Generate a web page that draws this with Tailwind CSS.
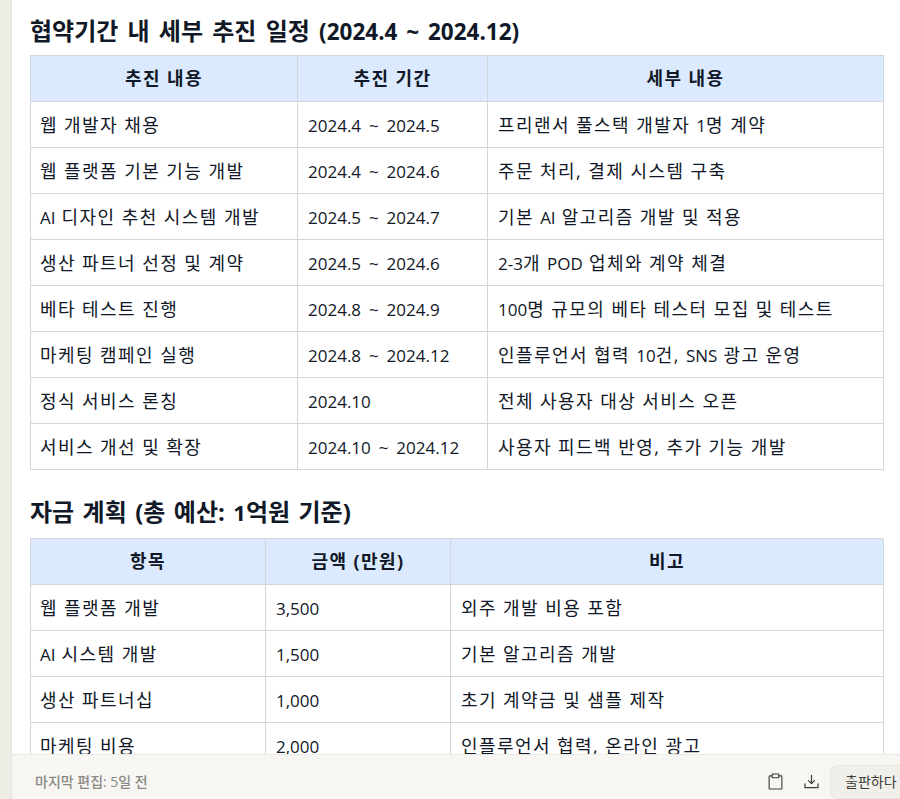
<!DOCTYPE html>
<html lang="ko">
<head>
    <meta charset="UTF-8">
    <title>추진 일정</title>
    <script src="https://cdn.jsdelivr.net/npm/@tailwindcss/browser@4"></script>
</head>
<body class="h-[799px] overflow-hidden bg-[#eeede5] font-['Open_Sans','Noto_Sans_CJK_KR',sans-serif] text-[#111827]">
    <div class="ml-[11px] h-full flex flex-col border-l border-[#e3e1d8] bg-white">
        <!-- Document -->
        <main class="flex-1 overflow-hidden pl-[18px] pr-[16px] pt-[15px]">
            <h2 class="h-[40px] text-[24px] leading-[32px] font-bold tracking-normal [word-spacing:3px]">협약기간 내 세부 추진 일정 <span class="text-[22.500px]">(2024.4 ~ 2024.12)</span></h2>
            <table class="w-[853px] table-fixed border-collapse text-[18px] tracking-[1.44px] [&_span]:text-[17px] [&_span]:tracking-normal [&_span]:[word-spacing:3.5px] [&_td]:pt-[1px] [&_td:first-child]:pl-[9px]">
                <colgroup>
                    <col class="w-[267px]"><col class="w-[190px]"><col class="w-[396px]">
                </colgroup>
                <thead>
                    <tr class="h-[46px] bg-[#dbeafe]">
                        <th class="border border-[#d3d6da] px-[10px] font-bold">추진 내용</th>
                        <th class="border border-[#d3d6da] px-[10px] font-bold">추진 기간</th>
                        <th class="border border-[#d3d6da] px-[10px] font-bold">세부 내용</th>
                    </tr>
                </thead>
                <tbody>
                    <tr class="h-[46px]"><td class="border border-[#d3d6da] px-[10px]">웹 개발자 채용</td><td class="border border-[#d3d6da] px-[10px]"><span>2024.4 ~ 2024.5</span></td><td class="border border-[#d3d6da] px-[10px]">프리랜서 풀스택 개발자 <span>1</span>명 계약</td></tr>
                    <tr class="h-[46px]"><td class="border border-[#d3d6da] px-[10px]">웹 플랫폼 기본 기능 개발</td><td class="border border-[#d3d6da] px-[10px]"><span>2024.4 ~ 2024.6</span></td><td class="border border-[#d3d6da] px-[10px]">주문 처리, 결제 시스템 구축</td></tr>
                    <tr class="h-[46px]"><td class="border border-[#d3d6da] px-[10px]"><span>AI</span> 디자인 추천 시스템 개발</td><td class="border border-[#d3d6da] px-[10px]"><span>2024.5 ~ 2024.7</span></td><td class="border border-[#d3d6da] px-[10px]">기본 <span>AI</span> 알고리즘 개발 및 적용</td></tr>
                    <tr class="h-[46px]"><td class="border border-[#d3d6da] px-[10px]">생산 파트너 선정 및 계약</td><td class="border border-[#d3d6da] px-[10px]"><span>2024.5 ~ 2024.6</span></td><td class="border border-[#d3d6da] px-[10px]"><span>2-3</span>개 <span>POD</span> 업체와 계약 체결</td></tr>
                    <tr class="h-[46px]"><td class="border border-[#d3d6da] px-[10px]">베타 테스트 진행</td><td class="border border-[#d3d6da] px-[10px]"><span>2024.8 ~ 2024.9</span></td><td class="border border-[#d3d6da] px-[10px]"><span>100</span>명 규모의 베타 테스터 모집 및 테스트</td></tr>
                    <tr class="h-[46px]"><td class="border border-[#d3d6da] px-[10px]">마케팅 캠페인 실행</td><td class="border border-[#d3d6da] px-[10px]"><span>2024.8 ~ 2024.12</span></td><td class="border border-[#d3d6da] px-[10px]">인플루언서 협력 <span>10</span>건, <span>SNS</span> 광고 운영</td></tr>
                    <tr class="h-[46px]"><td class="border border-[#d3d6da] px-[10px]">정식 서비스 론칭</td><td class="border border-[#d3d6da] px-[10px]"><span>2024.10</span></td><td class="border border-[#d3d6da] px-[10px]">전체 사용자 대상 서비스 오픈</td></tr>
                    <tr class="h-[46px]"><td class="border border-[#d3d6da] px-[10px]">서비스 개선 및 확장</td><td class="border border-[#d3d6da] px-[10px]"><span>2024.10 ~ 2024.12</span></td><td class="border border-[#d3d6da] px-[10px]">사용자 피드백 반영, 추가 기능 개발</td></tr>
                </tbody>
            </table>

            <h2 class="mt-[26px] h-[42px] text-[24px] leading-[32px] font-bold [word-spacing:2.200px]">자금 계획 (총 예산: <span class="text-[22px]">1</span>억원 기준)</h2>
            <table class="w-[853px] table-fixed border-collapse text-[18px] tracking-[1.44px] [&_span]:text-[17px] [&_span]:tracking-normal [&_td]:pt-[1px] [&_td:first-child]:pl-[9px]">
                <colgroup>
                    <col class="w-[235px]"><col class="w-[185px]"><col class="w-[433px]">
                </colgroup>
                <thead>
                    <tr class="h-[46px] bg-[#dbeafe]">
                        <th class="border border-[#d3d6da] px-[10px] font-bold">항목</th>
                        <th class="border border-[#d3d6da] px-[10px] font-bold">금액 (만원)</th>
                        <th class="border border-[#d3d6da] px-[10px] font-bold">비고</th>
                    </tr>
                </thead>
                <tbody>
                    <tr class="h-[46px]"><td class="border border-[#d3d6da] px-[10px]">웹 플랫폼 개발</td><td class="border border-[#d3d6da] px-[10px]"><span>3,500</span></td><td class="border border-[#d3d6da] px-[10px]">외주 개발 비용 포함</td></tr>
                    <tr class="h-[46px]"><td class="border border-[#d3d6da] px-[10px]"><span>AI</span> 시스템 개발</td><td class="border border-[#d3d6da] px-[10px]"><span>1,500</span></td><td class="border border-[#d3d6da] px-[10px]">기본 알고리즘 개발</td></tr>
                    <tr class="h-[46px]"><td class="border border-[#d3d6da] px-[10px]">생산 파트너십</td><td class="border border-[#d3d6da] px-[10px]"><span>1,000</span></td><td class="border border-[#d3d6da] px-[10px]">초기 계약금 및 샘플 제작</td></tr>
                    <tr class="h-[46px]"><td class="border border-[#d3d6da] px-[10px]">마케팅 비용</td><td class="border border-[#d3d6da] px-[10px]"><span>2,000</span></td><td class="border border-[#d3d6da] px-[10px]">인플루언서 협력, 온라인 광고</td></tr>
                </tbody>
            </table>
        </main>

        <!-- Bottom bar -->
        <footer class="h-[45px] shrink-0 flex items-center justify-between border-t border-[#ebe9e2] bg-[#f7f6f2] pl-[23px] pt-[9px]">
            <span class="mb-[1px] text-[14px] font-medium text-[#8a8983]">마지막 편집: 5일 전</span>
            <div class="flex items-center">
                <svg class="w-[15px] h-[17px] mr-[21px]" viewBox="0 0 16 18" fill="none" stroke="#3d3d3a" stroke-width="1.2" stroke-linejoin="round">
                    <path d="M4.500 3H2a.8.8 0 0 0-.8.8v12.400a.8.8 0 0 0 .8.8h12a.8.8 0 0 0 .8-.8V3.800a.8.8 0 0 0-.8-.8h-2.500"/>
                    <path d="M4.500 1h7v4h-7z"/>
                </svg>
                <svg class="w-[15px] h-[15px] mr-[11px]" viewBox="0 0 16 16" fill="none" stroke="#3d3d3a" stroke-width="1.300" stroke-linecap="round" stroke-linejoin="round">
                    <path d="M8 1.500v8.500M4.800 7 8 10.200 11.200 7"/>
                    <path d="M1 10.500v4h14v-4"/>
                </svg>
                <button class="h-[34px] w-[70px] rounded-l-[8px] border border-r-0 border-[#e8e6dd] bg-[#f0efe9] pl-[14px] text-left text-[14px] whitespace-nowrap overflow-hidden text-[#3d3d3a]">출판하다</button>
            </div>
        </footer>
    </div>
</body>
</html>
